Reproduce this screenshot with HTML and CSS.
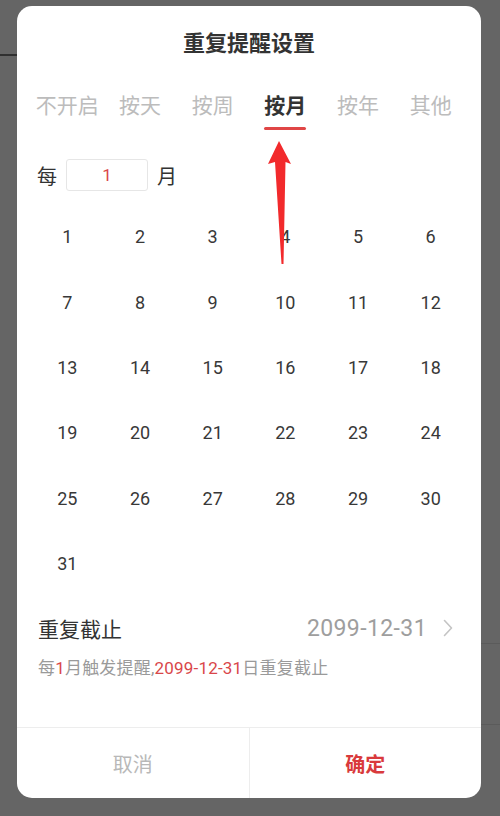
FILE: index.html
```html
<!DOCTYPE html>
<html lang="zh">
<head>
<meta charset="utf-8">
<title>重复提醒设置</title>
<link rel="stylesheet" href="styles.css">
</head>
<body>
<div class="backdrop">
  <div class="backdrop-header"></div>
  <div class="backdrop-row backdrop-row-a"></div>
  <div class="backdrop-row backdrop-row-b"></div>
</div>

<div class="modal">
  <div class="modal-title">重复提醒设置</div>

  <div class="tabs">
    <div class="tab">不开启</div>
    <div class="tab">按天</div>
    <div class="tab">按周</div>
    <div class="tab tab-active">按月</div>
    <div class="tab">按年</div>
    <div class="tab">其他</div>
  </div>

  <div class="every-row">
    <span class="every-label">每</span>
    <div class="every-input">1</div>
    <span class="every-label">月</span>
  </div>

  <div class="day-grid">
    <div class="day">1</div><div class="day">2</div><div class="day">3</div><div class="day">4</div><div class="day">5</div><div class="day">6</div>
    <div class="day">7</div><div class="day">8</div><div class="day">9</div><div class="day">10</div><div class="day">11</div><div class="day">12</div>
    <div class="day">13</div><div class="day">14</div><div class="day">15</div><div class="day">16</div><div class="day">17</div><div class="day">18</div>
    <div class="day">19</div><div class="day">20</div><div class="day">21</div><div class="day">22</div><div class="day">23</div><div class="day">24</div>
    <div class="day">25</div><div class="day">26</div><div class="day">27</div><div class="day">28</div><div class="day">29</div><div class="day">30</div>
    <div class="day">31</div>
  </div>

  <div class="end-row">
    <span class="end-label">重复截止</span>
    <span class="end-value">2099-12-31</span>
    <svg class="chevron" width="10" height="18" viewBox="0 0 10 18"><polyline points="1.5,1.5 8.5,9 1.5,16.5" fill="none" stroke="#c4c4c4" stroke-width="1.6" stroke-linecap="round" stroke-linejoin="round"/></svg>
  </div>

  <div class="summary">每<span class="hl">1</span>月触发提醒,<span class="hl">2099-12-31</span>日重复截止</div>

  <div class="footer">
    <div class="btn btn-cancel">取消</div>
    <div class="btn btn-ok">确定</div>
  </div>
</div>

<svg class="annot-arrow" width="500" height="816" viewBox="0 0 500 816">
  <polygon points="279,141 291,164 285.5,162 283.5,264 281.5,264 275,162 268,164" fill="#f22a2c"/>
</svg>
</body>
</html>
```

FILE: styles.css
```css
html, body {
  margin: 0;
  padding: 0;
}
body {
  width: 500px;
  height: 816px;
  background: #656565;
  font-family: "Roboto", "Noto Sans CJK SC", sans-serif;
  color: #333;
  overflow: hidden;
}
.backdrop-header {
  width: 40px;
  height: 54px;
  border-bottom: 2px solid #303030;
}
.backdrop-row {
  margin-left: 460px;
  border-bottom: 1px solid #5b5b5b;
}
.backdrop-row-a {
  height: 587px;
}
.backdrop-row-b {
  height: 80px;
}
.modal {
  position: absolute;
  left: 17px;
  top: 6px;
  width: 464px;
  height: 792px;
  background: #fff;
  border-radius: 15px;
  display: flex;
  flex-direction: column;
  overflow: hidden;
}
.modal-title {
  margin-top: 20px;
  height: 30px;
  line-height: 30px;
  text-align: center;
  font-family: "Noto Sans CJK SC", sans-serif;
  font-size: 22px;
  font-weight: 700;
  color: #333;
}
.tabs {
  margin-top: 33px;
  padding: 0 14px;
  display: grid;
  grid-template-columns: repeat(6, 1fr);
}
.tab {
  position: relative;
  height: 30px;
  line-height: 30px;
  padding-bottom: 11px;
  text-align: center;
  font-family: "Noto Sans CJK SC", sans-serif;
  font-size: 21px;
  color: #bcbcbc;
}
.tab-active {
  color: #333;
  font-weight: 700;
}
.tab-active::after {
  content: "";
  position: absolute;
  left: 50%;
  bottom: 0;
  width: 42px;
  height: 3px;
  margin-left: -21px;
  border-radius: 2px;
  background: #e04646;
}
.every-row {
  margin-top: 29px;
  padding: 0 20px;
  display: flex;
  align-items: center;
  gap: 9px;
}
.every-label {
  font-family: "Noto Sans CJK SC", sans-serif;
  font-size: 20px;
  color: #333;
}
.every-input {
  width: 80px;
  height: 30px;
  border: 1px solid #e6e6e6;
  border-radius: 3px;
  line-height: 30px;
  text-align: center;
  font-size: 17px;
  color: #d9474a;
}
.day-grid {
  margin-top: 13px;
  padding: 0 14px;
  display: grid;
  grid-template-columns: repeat(6, 1fr);
  grid-auto-rows: 65.4px;
}
.day {
  display: flex;
  align-items: center;
  justify-content: center;
  font-size: 18px;
  color: #383838;
}
.end-row {
  margin-top: 12px;
  height: 40px;
  padding: 0 28px 0 21px;
  display: flex;
  align-items: center;
}
.end-label {
  flex: 1;
  font-family: "Noto Sans CJK SC", sans-serif;
  font-size: 21px;
  color: #333;
}
.end-value {
  font-size: 23px;
  letter-spacing: 0.4px;
  color: #9e9e9e;
  margin-right: 16px;
}
.chevron {
  display: block;
}
.summary {
  margin-top: 9px;
  padding: 0 21px;
  height: 22px;
  line-height: 22px;
  font-size: 17px;
  letter-spacing: 0.2px;
  color: #9a9a9a;
}
.summary .hl {
  color: #d9474a;
}
.footer {
  margin-top: auto;
  height: 70px;
  border-top: 1px solid #ededed;
  display: flex;
}
.btn {
  flex: 1;
  display: flex;
  align-items: center;
  justify-content: center;
  font-family: "Noto Sans CJK SC", sans-serif;
  font-size: 20px;
}
.btn-cancel {
  color: #b8b8b8;
  border-right: 1px solid #ededed;
}
.btn-ok {
  color: #d93a3c;
  font-weight: 700;
}
.annot-arrow {
  position: absolute;
  left: 0;
  top: 0;
  pointer-events: none;
}
```
